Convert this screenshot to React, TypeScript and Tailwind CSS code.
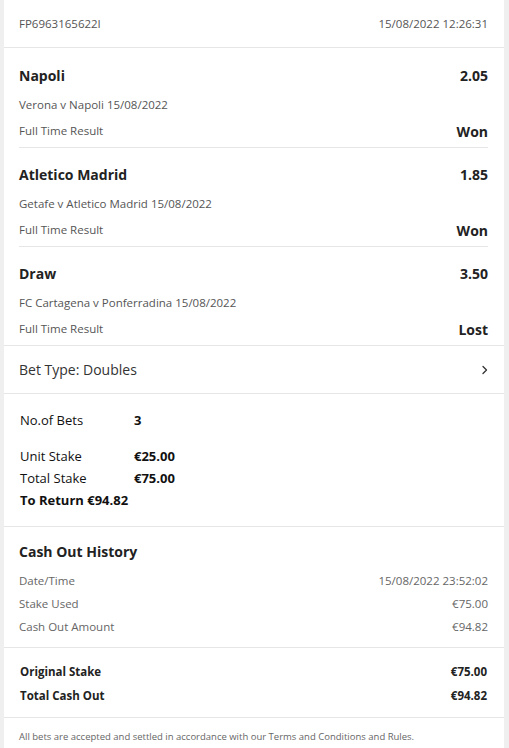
import React from "react";

const selections = [
  {
    name: "Napoli",
    odds: "2.05",
    event: "Verona v Napoli 15/08/2022",
    market: "Full Time Result",
    result: "Won",
  },
  {
    name: "Atletico Madrid",
    odds: "1.85",
    event: "Getafe v Atletico Madrid 15/08/2022",
    market: "Full Time Result",
    result: "Won",
  },
  {
    name: "Draw",
    odds: "3.50",
    event: "FC Cartagena v Ponferradina 15/08/2022",
    market: "Full Time Result",
    result: "Lost",
  },
];

const history = [
  { label: "Date/Time", value: "15/08/2022 23:52:02" },
  { label: "Stake Used", value: "€75.00" },
  { label: "Cash Out Amount", value: "€94.82" },
];

export default function App() {
  return (
    <div className="min-h-[748px] bg-[#efefef] pl-[4px] pr-[5px] [font-family:'Open_Sans',sans-serif] text-[#222]">
      <div className="bg-white min-h-[748px]">
        {/* Header */}
        <div className="h-[48px] px-[15px] pr-[16px] flex items-center justify-between border-b border-[#e6e6e6] text-[11.5px] text-[#555]">
          <span>FP6963165622I</span>
          <span>15/08/2022 12:26:31</span>
        </div>

        {/* Selections */}
        <div className="px-[15px] pr-[16px] border-b border-[#e6e6e6]">
          {selections.map((s, i) => (
            <div
              key={s.name}
              className={`flex flex-col pb-[6px] ${i === 0 ? "pt-[17px]" : "pt-[16px]"} ${
                i < selections.length - 1 ? "border-b border-[#e6e6e6]" : ""
              }`}
            >
              <div className="h-[20px] flex items-center justify-between text-[14px] font-bold">
                <span>{s.name}</span>
                <span>{s.odds}</span>
              </div>
              <div className="mt-[12px] h-[16px] flex items-center text-[11.5px] text-[#555]">
                {s.event}
              </div>
              <div className="mt-[8px] h-[20px] flex items-center justify-between">
                <span className="text-[11.5px] text-[#555]">{s.market}</span>
                <span className="text-[14px] font-bold">{s.result}</span>
              </div>
            </div>
          ))}
        </div>

        {/* Bet type */}
        <div className="h-[48px] px-[15px] pr-[16px] flex items-center justify-between border-b border-[#e6e6e6] text-[14px] text-[#333]">
          <span>Bet Type: Doubles</span>
          <svg width="6" height="10" viewBox="0 0 6 10" fill="none">
            <polyline
              points="1,1.5 4.5,5 1,8.5"
              stroke="#333"
              strokeWidth="1.3"
              strokeLinecap="round"
              strokeLinejoin="round"
            />
          </svg>
        </div>

        {/* Stakes */}
        <div className="px-[16px] pt-[16px] pb-[14px] border-b border-[#e6e6e6] text-[13px] text-[#111]">
          <div className="h-[22px] flex items-center">
            <span className="w-[114px]">No.of Bets</span>
            <span className="font-bold">3</span>
          </div>
          <div className="mt-[14px] h-[22px] flex items-center">
            <span className="w-[114px]">Unit Stake</span>
            <span className="font-bold">€25.00</span>
          </div>
          <div className="h-[22px] flex items-center">
            <span className="w-[114px]">Total Stake</span>
            <span className="font-bold">€75.00</span>
          </div>
          <div className="h-[22px] flex items-center font-bold">
            To Return €94.82
          </div>
        </div>

        {/* Cash out history */}
        <div className="px-[15px] pr-[16px] pt-[13px] pb-[9px] border-b border-[#e6e6e6]">
          <div className="h-[22px] flex items-center text-[14px] font-bold">
            Cash Out History
          </div>
          <div className="mt-[7px]">
            {history.map((h) => (
              <div
                key={h.label}
                className="h-[23px] flex items-center justify-between text-[11.5px] text-[#666]"
              >
                <span>{h.label}</span>
                <span>{h.value}</span>
              </div>
            ))}
          </div>
        </div>

        {/* Totals */}
        <div className="px-[16px] pr-[17px] pt-[12px] pb-[9px] border-b border-[#e6e6e6] text-[11.5px] font-bold">
          <div className="h-[24px] flex items-center justify-between">
            <span>Original Stake</span>
            <span>€75.00</span>
          </div>
          <div className="h-[24px] flex items-center justify-between">
            <span>Total Cash Out</span>
            <span>€94.82</span>
          </div>
        </div>

        {/* Footer */}
        <div className="px-[15px] pt-[12px] text-[9.5px] text-[#666]">
          All bets are accepted and settled in accordance with our Terms and
          Conditions and Rules.
        </div>
      </div>
    </div>
  );
}
